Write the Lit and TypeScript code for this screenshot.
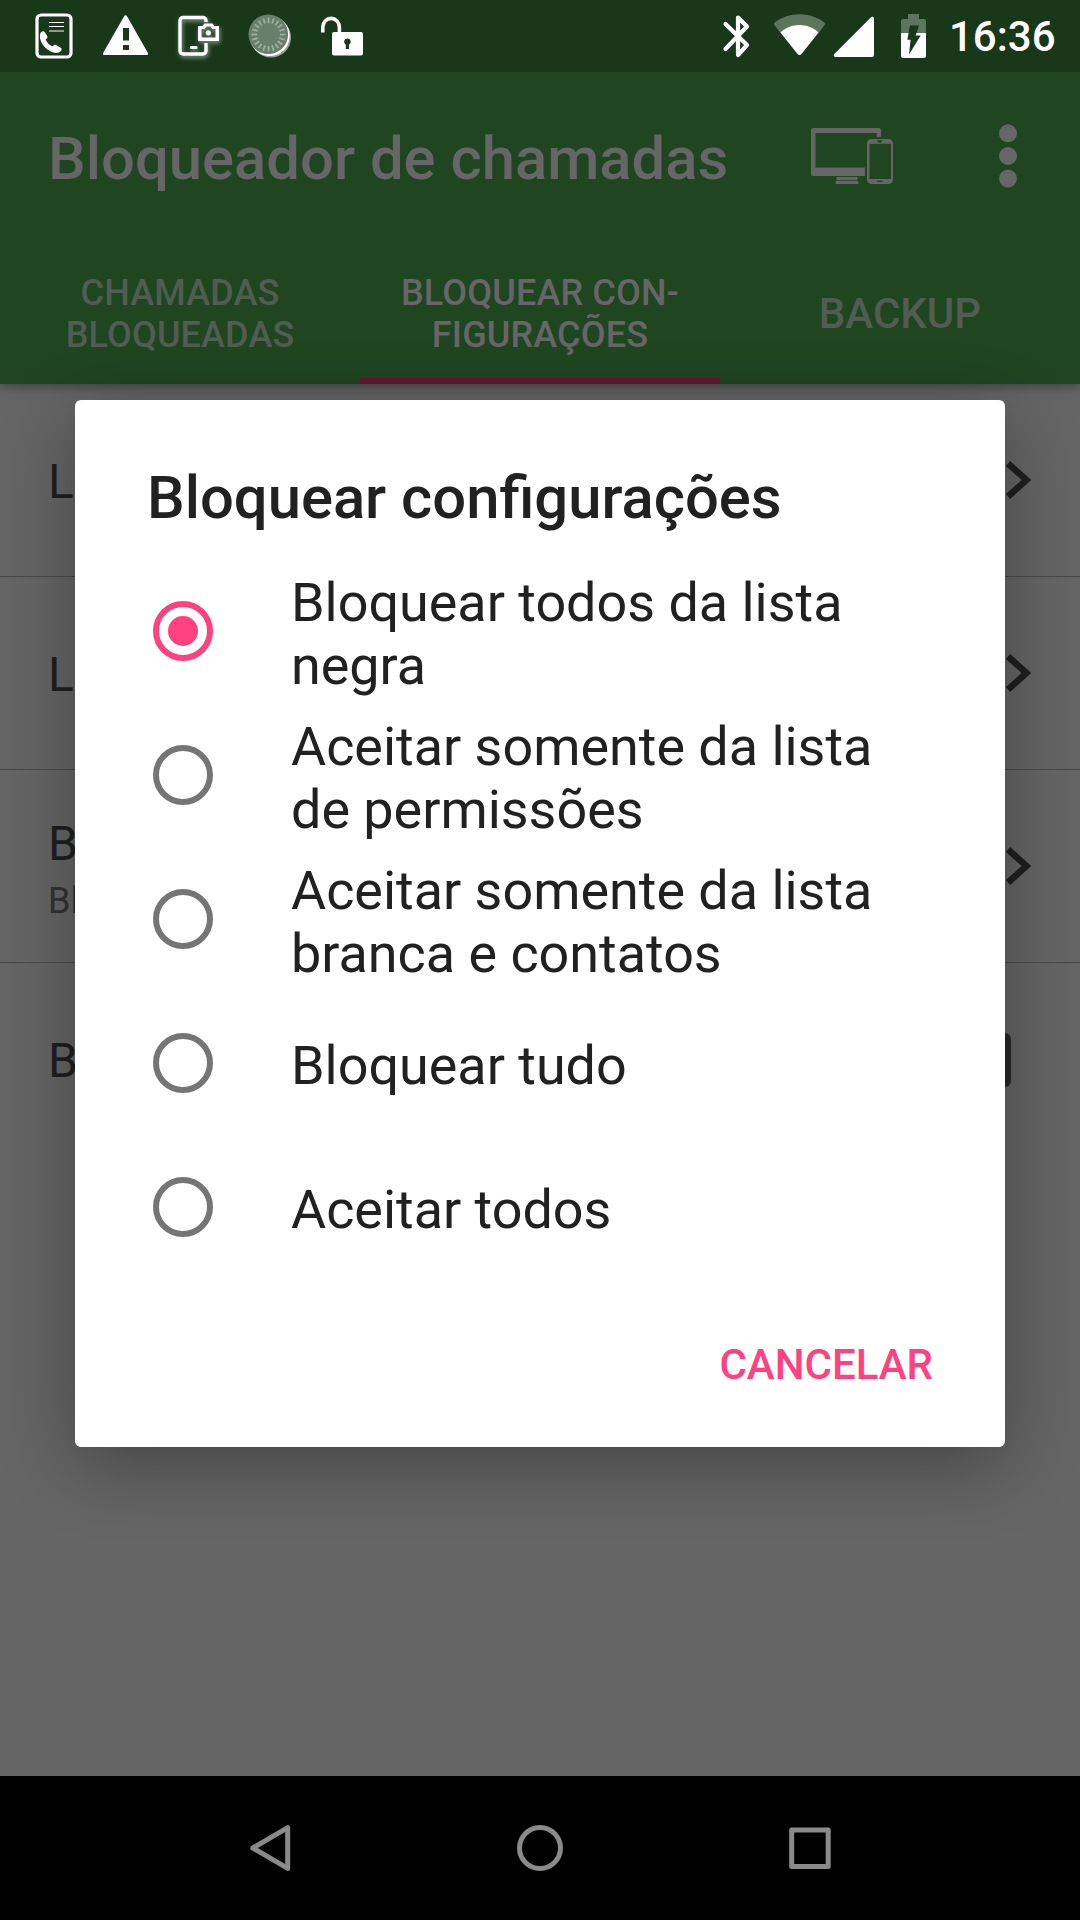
import { LitElement, html, css, svg, nothing } from "lit";
import { customElement, property, state } from "lit/decorators.js";

interface SettingRow {
  title: string;
  subtitle?: string;
  control: "chevron" | "checkbox";
}

@customElement("status-bar")
class StatusBar extends LitElement {
  static styles = css`
    :host {
      display: flex;
      flex: none;
      height: 72px;
      padding: 0 24px 0 18px;
      background: #183819;
      color: #fff;
      font: 500 42px/72px Roboto, sans-serif;
    }
    svg { display: block; flex: none; height: 72px; }
    .spacer { flex: 1; }
    .time { width: 107px; padding: 1px 0 0 1px; }
  `;

  private icon(x: number, width: number, body: unknown) {
    return html`<svg width=${width} height="72" viewBox="${x} 0 ${width} 72" fill="#fff">${body}</svg>`;
  }

  private ticks() {
    return Array.from({ length: 20 }, (_, i) => svg`
      <path d="M268.5 17.5v5.5" transform="rotate(${i * 18} 268.5 34.5)" stroke="#9db09e" stroke-width="1.8"/>`);
  }

  render() {
    return html`
      ${this.icon(18, 72, svg`
        <rect x="37" y="15" width="34" height="42" rx="4" fill="none" stroke="#fff" stroke-width="3.2"/>
        <path d="M49 22.5h15M49 26.5h15M49 31h15" stroke="#fff" stroke-width="1.2"/>
        <path d="M40.5 33c1.200-1.800 3.200-2.200 4.200-1l2.600 4.200c.5 1.300-.2 2.300-1.700 3.200 1.400 3.200 3.800 5.600 7 7.200 1-1.500 2.300-2.200 3.500-1.500l5 2.800c1.500 1-.3 3.800-2.500 4.700-4.100 1.200-9.400-1-13.200-4.800-4.500-4.600-6.600-10.400-4.900-14.800z"/>`)}
      ${this.icon(90, 72, svg`
        <path fill-rule="evenodd" d="M124.300 15.900c.6-1 2-1 2.600 0l21 37c.5 1-.1 2.100-1.200 2.100h-42.400c-1.100 0-1.700-1.100-1.200-2.100zM123 28v12.500h6V28zM123 45v5h6v-5z"/>`)}
      ${this.icon(162, 72, svg`
        <g style="filter:drop-shadow(1px 2px 2px rgba(255,255,255,.5))">
          <path d="M206 22v-1.500a3 3 0 0 0-3-3h-20a3 3 0 0 0-3 3v30.500a3 3 0 0 0 3 3h20a3 3 0 0 0 3-3V43" fill="none" stroke="#fff" stroke-width="3.400"/>
          <rect x="190" y="46" width="7.500" height="3" rx="1"/>
          <path fill-rule="evenodd" d="M198 26h4.500l2-2.500h8l2 2.500h4.500v15h-21zM201.500 29v8.500h14V29h-3l-2-2.500h-4l-2 2.500z"/>
          <circle cx="208.300" cy="32.800" r="2.600"/>
        </g>`)}
      ${this.icon(234, 72, svg`
        <circle cx="271" cy="37.500" r="20" fill="#91a392"/>
        <circle cx="269.700" cy="36" r="20" />
        <circle cx="268.300" cy="34.300" r="19.800" fill="#687f69"/>
        ${this.ticks()}`)}
      ${this.icon(306, 72, svg`
        <path d="M322.800 32.500v-5.500a8.300 8.600 0 0 1 16.600 0v7" fill="none" stroke="#fff" stroke-width="3.600"/>
        <path fill-rule="evenodd" d="M334 32h27a2 2 0 0 1 2 2v19.500a2 2 0 0 1-2 2h-27a2 2 0 0 1-2-2V34a2 2 0 0 1 2-2zM347.300 38.500a3.300 3.300 0 0 0-1.500 6.200v4.300h3.200v-4.300a3.300 3.300 0 0 0-1.700-6.200z"/>`)}
      <div class="spacer"></div>
      ${this.icon(710, 55, svg`
        <path d="M725.500 24l21.500 21-9 10V17.500l9 9-21.500 22.500" fill="none" stroke="#fff" stroke-width="4.200" stroke-linecap="round" stroke-linejoin="round"/>`)}
      ${this.icon(765, 65, svg`
        <path fill="#5d745e" d="M774.500 22.800C781 17.300 790 14.300 799.500 14.300s18.500 3 25 8.500c.7.700.7 1.400.1 2.200L819 32.500H780L774.400 25c-.6-.8-.6-1.500.1-2.200z"/>
        <path d="M780.400 32.400c5.400-4.700 12-7.400 19.100-7.400s13.700 2.700 19.100 7.400L801.500 54c-1.100 1.300-2.900 1.300-4 0z"/>`)}
      ${this.icon(830, 50, svg`
        <path d="M871 17.300c1-1 3-.5 3 1.200V55a2 2 0 0 1-2 2h-36.500c-1.700 0-2.300-1.800-1.200-3z"/>`)}
      ${this.icon(880, 68, svg`
        <path fill="#5d745e" d="M908 14h11v5h5a2 2 0 0 1 2 2v12.500h-25V21a2 2 0 0 1 2-2h5z"/>
        <path d="M901 33h25v23a2 2 0 0 1-2 2h-21a2 2 0 0 1-2-2z"/>
        <path fill="#183819" d="M910 25.500h9l-3.300 10h5L909 54.500l1.600-14.800h-3.300z"/>`)}
      <div class="time">16:36</div>
    `;
  }
}

@customElement("app-header")
class AppHeader extends LitElement {
  @property({ type: Number }) active = 1;

  static styles = css`
    :host {
      display: flex;
      flex-direction: column;
      flex: none;
      height: 312px;
      background: #1f4521;
      color: #666;
      font-family: Roboto, sans-serif;
      font-weight: 500;
      box-shadow: 0 3px 10px rgba(0, 0, 0, 0.35);
    }
    .toolbar {
      display: flex;
      align-items: center;
      height: 168px;
      padding: 0 48px;
    }
    .title { flex: 1; font-size: 59.8px; line-height: 70px; padding-top: 6px; white-space: nowrap; }
    .devices { display: block; margin-right: 106px; }
    .more { display: block; margin-right: 15px; }
    .tabs { display: grid; grid-template-columns: repeat(3, 1fr); height: 144px; }
    .tab {
      display: flex;
      flex-direction: column;
      align-items: center;
      justify-content: center;
      color: #505d51;
      font-size: 36px;
      line-height: 42px;
      letter-spacing: 0.15px;
      border-bottom: 6px solid transparent;
      padding-top: 10px;
      box-sizing: border-box;
      white-space: nowrap;
    }
    .tab.single { font-size: 42px; letter-spacing: 0; }
    .tab.active { color: #666; border-color: #631831; }
  `;

  render() {
    const tabs = [["CHAMADAS", "BLOQUEADAS"], ["BLOQUEAR CON-", "FIGURAÇÕES"], ["BACKUP"]];
    return html`
      <div class="toolbar">
        <div class="title">Bloqueador de chamadas</div>
        <svg class="devices" width="82" height="56" viewBox="811 128 82 56" fill="#666">
          <path fill-rule="evenodd" d="M813 128h66a2 2 0 0 1 2 2v7h-4.200v-4H815.500v34.500H865v8.500H813a2 2 0 0 1-2-2v-44a2 2 0 0 1 2-2z"/>
          <path d="M836.500 177h21v3.200h-21zM836 181h22l.5 3h-23z"/>
          <path fill-rule="evenodd" d="M871.500 139h17a4.500 4.500 0 0 1 4.500 4.500v36a4.500 4.500 0 0 1-4.500 4.500h-17a4.500 4.500 0 0 1-4.500-4.500v-36a4.500 4.500 0 0 1 4.500-4.500zM869.500 143.800v35.200h21.500v-35.200z"/>
          <path d="M877 140.800h5.500M878.500 142h2.500M877 181.300h5.500" stroke="#1f4521" stroke-width="1.300"/>
        </svg>
        <svg class="more" width="18" height="64" viewBox="0 0 18 64" fill="#666">
          <circle cx="9" cy="9.300" r="9"/><circle cx="9" cy="32" r="9"/><circle cx="9" cy="54.600" r="9"/>
        </svg>
      </div>
      <div class="tabs">
        ${tabs.map((lines, i) => html`
          <div class="tab ${i === this.active ? "active" : ""} ${lines.length === 1 ? "single" : ""}">
            ${lines.map((l) => html`<span>${l}</span>`)}
          </div>`)}
      </div>
    `;
  }
}

@customElement("settings-list")
class SettingsList extends LitElement {
  @property({ attribute: false }) rows: SettingRow[] = [];

  static styles = css`
    :host { display: block; flex: 1; font-family: Roboto, sans-serif; color: #1f1f1f; }
    .row {
      display: flex;
      align-items: center;
      justify-content: space-between;
      height: 193px;
      box-sizing: border-box;
      border-bottom: 1px solid #484848;
      padding: 0 49px 0 48px;
    }
    .row:last-child { border: 0; padding-right: 69px; }
    .title { font-size: 48px; line-height: 56px; }
    .sub { font-size: 36px; line-height: 42px; color: #323232; margin-top: 8px; }
    .one { padding-top: 3px; }
    .two { padding-top: 5px; }
    .check { width: 54px; height: 54px; border-radius: 6px; background: #282828; }
    svg { display: block; }
  `;

  render() {
    return this.rows.map((r) => html`
      <div class="row">
        <div class=${r.subtitle ? "two" : "one"}>
          <div class="title">${r.title}</div>
          ${r.subtitle ? html`<div class="sub">${r.subtitle}</div>` : nothing}
        </div>
        ${r.control === "chevron"
          ? html`<svg width="26" height="40" viewBox="0 0 26 40"><path d="M3 3.500L21.500 20 3 36.500" fill="none" stroke="#1f1f1f" stroke-width="6.500"/></svg>`
          : html`<div class="check"></div>`}
      </div>`);
  }
}

@customElement("choice-dialog")
class ChoiceDialog extends LitElement {
  @property() heading = "";
  @property({ attribute: false }) options: string[] = [];
  @state() private selected = 0;

  static styles = css`
    :host {
      display: flex;
      flex-direction: column;
      width: 930px;
      height: 1047px;
      box-sizing: border-box;
      background: #fff;
      border-radius: 6px;
      color: #212121;
      font-family: Roboto, sans-serif;
      box-shadow: 0 18px 72px rgba(0, 0, 0, 0.32);
    }
    .heading { height: 159px; box-sizing: border-box; padding: 63px 72px 0; font-size: 59.75px; font-weight: 500; line-height: 70px; }
    .option { display: flex; align-items: center; height: 144px; padding-left: 78px; cursor: pointer; }
    .radio {
      display: flex;
      align-items: center;
      justify-content: center;
      flex: none;
      width: 60px;
      height: 60px;
      box-sizing: border-box;
      border: 6px solid #757575;
      border-radius: 50%;
    }
    .radio.on { border-color: #ff4081; }
    .radio.on::after { content: ""; width: 30px; height: 30px; border-radius: 50%; background: #ff4081; }
    .label { width: 620px; margin-left: 78px; padding-top: 5px; font-size: 53.9px; line-height: 63px; }
    .actions { display: flex; justify-content: flex-end; padding: 61px 72px 0; color: #ff4081; font-size: 42px; font-weight: 500; line-height: 49px; }
  `;

  render() {
    return html`
      <div class="heading">${this.heading}</div>
      ${this.options.map((o, i) => html`
        <div class="option" @click=${() => (this.selected = i)}>
          <div class="radio ${i === this.selected ? "on" : ""}"></div>
          <div class="label">${o}</div>
        </div>`)}
      <div class="actions">CANCELAR</div>
    `;
  }
}

@customElement("nav-bar")
class NavBar extends LitElement {
  static styles = css`
    :host {
      display: flex;
      flex: none;
      align-items: center;
      justify-content: center;
      gap: 210px;
      height: 144px;
      background: #000;
    }
    svg { display: block; fill: none; stroke: #8a8a8a; stroke-width: 5; stroke-linejoin: round; }
  `;

  render() {
    return html`
      <svg width="60" height="60" viewBox="240 1818 60 60"><path d="M287.700 1827.600v40.800L252.800 1848z"/></svg>
      <svg width="60" height="60" viewBox="0 0 60 60"><circle cx="30" cy="30" r="20.500"/></svg>
      <svg width="60" height="60" viewBox="0 0 60 60"><rect x="11.700" y="12" width="36.500" height="36.500"/></svg>
    `;
  }
}

@customElement("app-root")
class AppRoot extends LitElement {
  static styles = css`
    :host {
      display: flex;
      flex-direction: column;
      position: relative;
      width: 1080px;
      height: 1920px;
      overflow: hidden;
      background: #656565;
    }
    .content { display: flex; flex-direction: column; flex: 1; overflow: hidden; }
    .overlay {
      position: absolute;
      inset: 71px 0 144px;
      display: flex;
      align-items: center;
      justify-content: center;
      overflow: hidden;
    }
  `;

  private rows: SettingRow[] = [
    { title: "L", control: "chevron" },
    { title: "L", control: "chevron" },
    { title: "B", subtitle: "Bl", control: "chevron" },
    { title: "B", control: "checkbox" },
  ];

  private options = [
    "Bloquear todos da lista negra",
    "Aceitar somente da lista de permissões",
    "Aceitar somente da lista branca e contatos",
    "Bloquear tudo",
    "Aceitar todos",
  ];

  render() {
    return html`
      <status-bar></status-bar>
      <div class="content">
        <app-header></app-header>
        <settings-list .rows=${this.rows}></settings-list>
      </div>
      <nav-bar></nav-bar>
      <div class="overlay">
        <choice-dialog heading="Bloquear configurações" .options=${this.options}></choice-dialog>
      </div>
    `;
  }
}
